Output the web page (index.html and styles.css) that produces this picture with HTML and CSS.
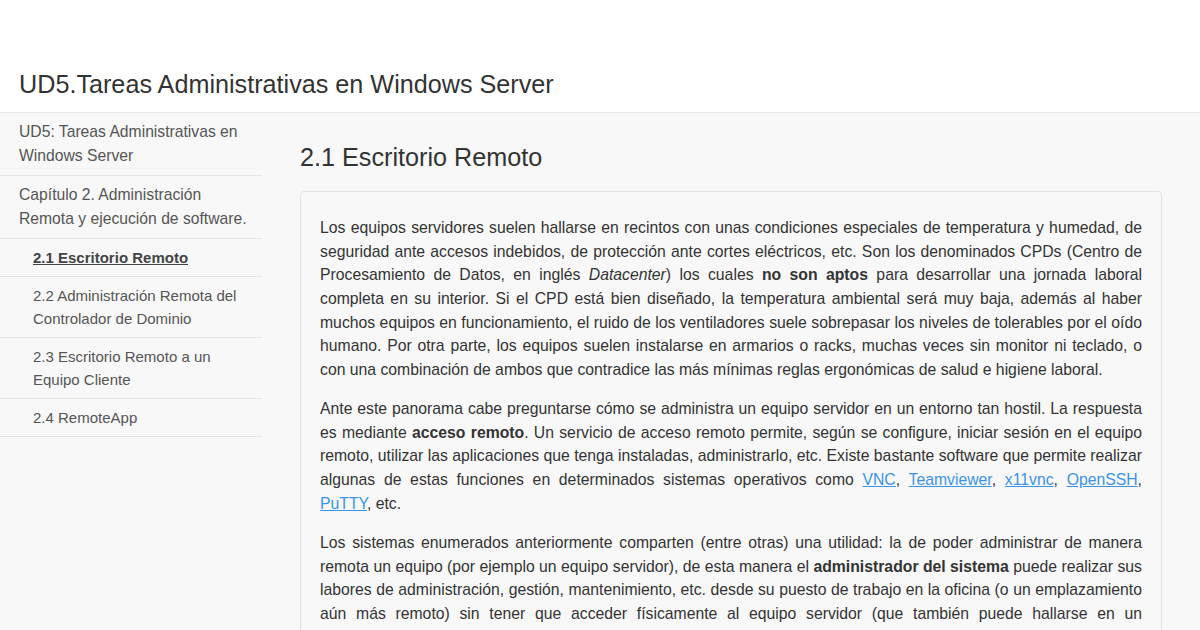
FILE: index.html
```
<!DOCTYPE html>
<html>
<head>
    <title>UD5.Tareas Administrativas en Windows Server</title>
    <link rel="stylesheet" href="styles.css">
</head>
<body>
    <header class="top">
        <div class="brand">UD5.Tareas Administrativas en Windows Server</div>
    </header>
    <div class="layout">
        <aside class="toc">
            <a class="toc-item" href="#">UD5: Tareas Administrativas en Windows Server</a>
            <a class="toc-item" href="#">Capítulo 2. Administración Remota y ejecución de software.</a>
            <a class="toc-item sub active" href="#">2.1 Escritorio Remoto</a>
            <a class="toc-item sub" href="#">2.2 Administración Remota del Controlador de Dominio</a>
            <a class="toc-item sub" href="#">2.3 Escritorio Remoto a un Equipo Cliente</a>
            <a class="toc-item sub" href="#">2.4 RemoteApp</a>
        </aside>
        <main class="content">
            <h1>2.1 Escritorio Remoto</h1>
            <div class="panel">
                <p>Los equipos servidores suelen hallarse en recintos con unas condiciones especiales de temperatura y humedad, de seguridad ante accesos indebidos, de protección ante cortes eléctricos, etc. Son los denominados CPDs (Centro de Procesamiento de Datos, en inglés <em>Datacenter</em>) los cuales <strong>no son aptos</strong> para desarrollar una jornada laboral completa en su interior. Si el CPD está bien diseñado, la temperatura ambiental será muy baja, además al haber muchos equipos en funcionamiento, el ruido de los ventiladores suele sobrepasar los niveles de tolerables por el oído humano. Por otra parte, los equipos suelen instalarse en armarios o racks, muchas veces sin monitor ni teclado, o con una combinación de ambos que contradice las más mínimas reglas ergonómicas de salud e higiene laboral.</p>
                <p>Ante este panorama cabe preguntarse cómo se administra un equipo servidor en un entorno tan hostil. La respuesta es mediante <strong>acceso remoto</strong>. Un servicio de acceso remoto permite, según se configure, iniciar sesión en el equipo remoto, utilizar las aplicaciones que tenga instaladas, administrarlo, etc. Existe bastante software que permite realizar algunas de estas funciones en determinados sistemas operativos como <a href="#">VNC</a>, <a href="#">Teamviewer</a>, <a href="#">x11vnc</a>, <a href="#">OpenSSH</a>, <a href="#">PuTTY</a>, etc.</p>
                <p>Los sistemas enumerados anteriormente comparten (entre otras) una utilidad: la de poder administrar de manera remota un equipo (por ejemplo un equipo servidor), de esta manera el <strong>administrador del sistema</strong> puede realizar sus labores de administración, gestión, mantenimiento, etc. desde su puesto de trabajo en la oficina (o un emplazamiento aún más remoto) sin tener que acceder físicamente al equipo servidor (que también puede hallarse en un emplazamiento distinto o incluso en otra ciudad).</p>
            </div>
        </main>
    </div>
</body>
</html>
```

FILE: styles.css
```
body {
    margin: 0;
    background-color: #f8f8f8;
    color: #333;
    font-family: "Liberation Sans", Arial, sans-serif;
}
.top {
    height: 113px;
    background-color: #fff;
    border-bottom: 1px solid #e7e7e7;
    box-sizing: border-box;
    display: flex;
    align-items: flex-end;
}
.brand {
    font-size: 25.2px;
    line-height: 28px;
    padding: 0 0 14px 19px;
    color: #333;
}
.layout {
    display: flex;
}
.toc {
    width: 262px;
    flex-shrink: 0;
    display: flex;
    flex-direction: column;
}
.toc-item {
    display: block;
    padding: 7px 8px 7px 19px;
    font-size: 15.7px;
    line-height: 24px;
    color: #555;
    text-decoration: none;
    border-bottom: 1px solid #e5e5e5;
}
.toc-item.sub {
    padding-left: 33px;
    font-size: 15px;
    line-height: 23px;
}
.toc-item.active {
    font-weight: bold;
    text-decoration: underline;
    color: #444;
}
.content {
    flex: 1;
    padding: 0 38px;
}
.content h1 {
    font-size: 25.2px;
    font-weight: normal;
    line-height: 28px;
    margin: 30px 0 20px 0;
    color: #333;
}
.panel {
    background-color: #f8f8f8;
    border: 1px solid #e3e3e3;
    border-radius: 4px;
    padding: 24px 19px;
}
.panel p {
    font-size: 15.75px;
    line-height: 23.65px;
    text-align: justify;
    margin: 0 0 15.5px 0;
}
.panel a {
    color: #3a94e6;
}
```
